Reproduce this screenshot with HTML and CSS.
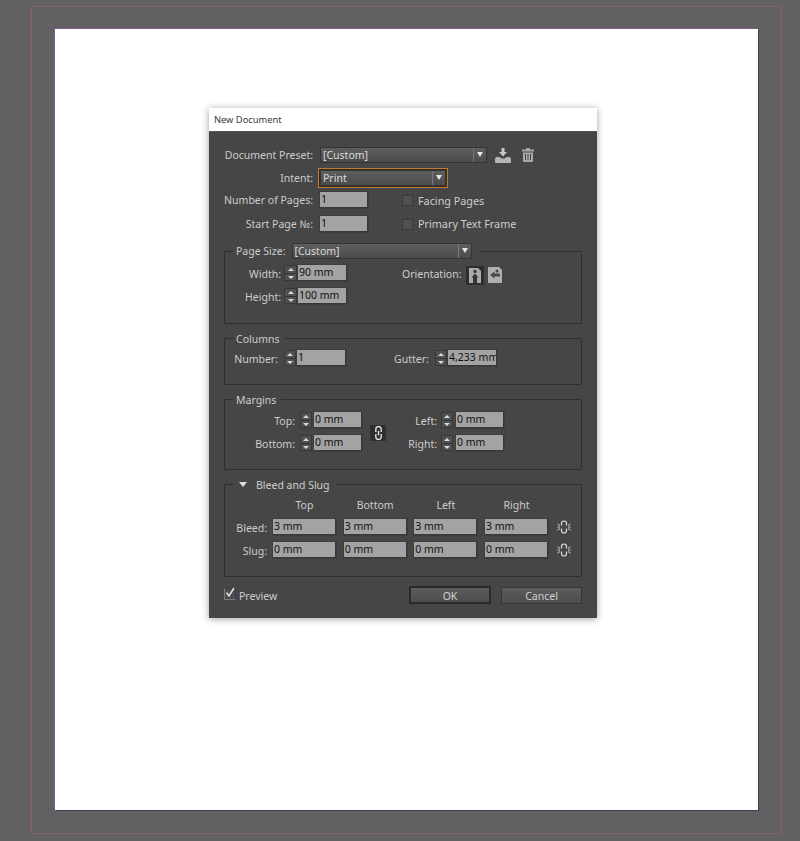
FILE: index.html
```html
<!DOCTYPE html>
<html lang="en">
<head>
<meta charset="utf-8">
<title>New Document</title>
<link rel="stylesheet" href="styles.css">
</head>
<body>
<div class="bleed-guide"></div>
<main class="page">
  <section class="dialog">
    <header class="titlebar">New Document</header>
    <div class="content">
      <div class="row">
        <span class="lbl w-top">Document Preset:</span>
        <div class="select w-preset"><span>[Custom]</span><i class="arrow"></i></div>
        <svg class="ico-save" viewBox="0 0 16 15" width="16" height="15"><path fill="#c9c9c9" d="M6.500 0h3v4H12L8 8.500 4 4h2.500z"/><path fill="#b5b5b5" d="M1 9h3.500l2 1.500h3L11.500 9H15l1 2v3a1 1 0 0 1-1 1H1a1 1 0 0 1-1-1v-3z"/></svg>
        <svg class="ico-trash" viewBox="0 0 12 14" width="12" height="14"><path fill="#a8a8a8" d="M4 0h4v1.500h4v2H0v-2h4z"/><path fill="#a8a8a8" fill-rule="evenodd" d="M1 4.500h10V13a1 1 0 0 1-1 1H2a1 1 0 0 1-1-1zM3 6v6h1V6zm2.500 0v6h1V6zM8 6v6h1V6z"/></svg>
      </div>
      <div class="row mt-intent">
        <span class="lbl w-top">Intent:</span>
        <div class="select w-intent focused"><span>Print</span><i class="arrow"></i></div>
      </div>
      <div class="row mt-pages">
        <span class="lbl w-top">Number of Pages:</span>
        <div class="input w-pages">1</div>
        <span class="check check-top"></span><span class="chk-text">Facing Pages</span>
      </div>
      <div class="row mt-start">
        <span class="lbl w-top">Start Page №:</span>
        <div class="input w-pages">1</div>
        <span class="check check-top"></span><span class="chk-text">Primary Text Frame</span>
      </div>

      <div class="group g-size">
        <div class="legend legend-size">
          <span class="lbl-plain">Page Size:</span>
          <div class="select w-size"><span>[Custom]</span><i class="arrow"></i></div>
        </div>
        <div class="size-body">
          <div class="stack">
            <div class="row">
              <span class="lbl w-size-lbl">Width:</span>
              <div class="spin s-13"><i class="up"></i><i class="down"></i></div>
              <div class="input w-49">90 mm</div>
            </div>
            <div class="row">
              <span class="lbl w-size-lbl">Height:</span>
              <div class="spin s-13"><i class="up"></i><i class="down"></i></div>
              <div class="input w-49">100 mm</div>
            </div>
          </div>
          <div class="orient">
            <span class="lbl-plain">Orientation:</span>
            <div class="orient-btn active">
              <svg viewBox="0 0 12 15" width="12" height="15"><path fill="#ababab" d="M0 0h9l3 3v12H0z"/><path fill="#353535" d="M6 5.500 9.500 9.500H8V15H4V9.500H2.500z"/><circle cx="6" cy="3.500" r="1.700" fill="#353535"/></svg>
            </div>
            <div class="orient-btn">
              <svg viewBox="0 0 14 16" width="14" height="16"><path fill="#b0b0b0" d="M0 0h11l3 3v13H0z"/><path fill="#484848" d="M2 8 6.500 4.500v2H12v3H6.500v2z"/><circle cx="9" cy="4" r="1.500" fill="#484848"/></svg>
            </div>
          </div>
        </div>
      </div>

      <div class="group g-cols">
        <div class="legend legend-text">Columns</div>
        <div class="row">
          <span class="lbl w-num">Number:</span>
          <div class="spin s-12"><i class="up"></i><i class="down"></i></div>
          <div class="input w-49">1</div>
          <span class="lbl w-gutter">Gutter:</span>
          <div class="spin s-12"><i class="up"></i><i class="down"></i></div>
          <div class="input w-49 clipped">4,233 mm</div>
        </div>
      </div>

      <div class="group g-margins">
        <div class="legend legend-text">Margins</div>
        <div class="margin-grid">
          <div class="row">
            <span class="lbl w-mar">Top:</span>
            <div class="spin s-12 sp2"><i class="up"></i><i class="down"></i></div>
            <div class="input w-48">0 mm</div>
          </div>
          <div class="link-btn">
            <svg viewBox="0 0 8 13" width="9" height="14"><path fill="none" stroke="#e2e2e2" stroke-width="1.300" d="M1.500 5.500V3a2.500 2.500 0 0 1 5 0v2.500M1.500 7.500V10a2.500 2.500 0 0 0 5 0V7.500M4 4.500v4"/></svg>
          </div>
          <div class="row">
            <span class="lbl w-mar2">Left:</span>
            <div class="spin s-12 sp3"><i class="up"></i><i class="down"></i></div>
            <div class="input w-48">0 mm</div>
          </div>
          <div class="row">
            <span class="lbl w-mar">Bottom:</span>
            <div class="spin s-12 sp2"><i class="up"></i><i class="down"></i></div>
            <div class="input w-48">0 mm</div>
          </div>
          <div class="row">
            <span class="lbl w-mar2">Right:</span>
            <div class="spin s-12 sp3"><i class="up"></i><i class="down"></i></div>
            <div class="input w-48">0 mm</div>
          </div>
        </div>
      </div>

      <div class="group g-bleed">
        <div class="legend legend-bleed"><i class="disclosure"></i><span>Bleed and Slug</span></div>
        <div class="bleed-grid">
          <span></span><span class="head">Top</span><span class="head">Bottom</span><span class="head">Left</span><span class="head">Right</span><span></span>
          <span class="lbl">Bleed:</span><div class="input">3 mm</div><div class="input">3 mm</div><div class="input">3 mm</div><div class="input">3 mm</div>
          <svg class="ico-unlink" viewBox="0 0 14 14" width="14" height="14"><path fill="none" stroke="#dcdcdc" stroke-width="1.200" d="M4.500 5.500V3.500a2.500 2.500 0 0 1 5 0v2M4.500 8.500v2a2.500 2.500 0 0 0 5 0v-2"/><path fill="none" stroke="#dcdcdc" stroke-width=".9" d="M0.500 4 3 5.500M0.500 7H3M0.500 10 3 8.500M13.500 4 11 5.500M13.500 7H11M13.500 10 11 8.500"/></svg>
          <span class="lbl">Slug:</span><div class="input">0 mm</div><div class="input">0 mm</div><div class="input">0 mm</div><div class="input">0 mm</div>
          <svg class="ico-unlink" viewBox="0 0 14 14" width="14" height="14"><path fill="none" stroke="#dcdcdc" stroke-width="1.200" d="M4.500 5.500V3.500a2.500 2.500 0 0 1 5 0v2M4.500 8.500v2a2.500 2.500 0 0 0 5 0v-2"/><path fill="none" stroke="#dcdcdc" stroke-width=".9" d="M0.500 4 3 5.500M0.500 7H3M0.500 10 3 8.500M13.500 4 11 5.500M13.500 7H11M13.500 10 11 8.500"/></svg>
        </div>
      </div>

      <footer class="footer">
        <span class="check check-preview">
          <svg viewBox="0 0 12 12" width="12" height="12"><path fill="none" stroke="#e4e4e4" stroke-width="1.500" d="M2.500 5.500 5 9 10 1"/></svg>
        </span>
        <span class="preview-text">Preview</span>
        <button class="btn btn-ok">OK</button>
        <button class="btn btn-cancel">Cancel</button>
      </footer>
    </div>
  </section>
</main>
</body>
</html>
```

FILE: styles.css
```css
* { box-sizing: border-box; }
html, body { margin: 0; height: 841px; overflow: hidden; }
body {
  position: relative;
  background: #616161;
  padding: 29px 42px 31px 55px;
  font-family: "Noto Sans", "Open Sans", sans-serif;
  font-size: 10.500px;
  color: #cdcdcd;
}
.bleed-guide {
  position: absolute;
  left: 31px; top: 6px;
  width: 751px; height: 828px;
  border: 1px solid #8b5f6c;
}
.page {
  position: relative;
  height: 781px;
  background: #fff;
  padding-top: 79px;
  box-shadow: -1px -1px 0 #7d5a92, 1px 1px 0 #3e3a5e;
}
.dialog {
  width: 388px;
  margin-left: 154px;
  background: #464646;
  box-shadow: 0 1px 7px rgba(0,0,0,.38);
}
.titlebar {
  height: 24px;
  background: #fff;
  color: #3a3a3a;
  font-size: 9.300px;
  line-height: 24px;
  padding-left: 5px;
  border-bottom: 1px solid #555;
}
.content { padding: 15px 15px 14px; }

.row { display: flex; align-items: center; height: 16px; white-space: nowrap; }
.lbl { display: block; text-align: right; line-height: 16px; flex: none; }
.group .lbl { height: 16px; line-height: 18px; }
.lbl-plain { flex: none; }
.w-top { width: 89px; margin-right: 7px; }
.mt-intent { margin-top: 7px; }
.mt-pages { margin-top: 6px; }
.mt-start { margin-top: 8px; }
.mt-start .chk-text { margin-bottom: 2px; }

.select {
  display: flex;
  align-items: center;
  justify-content: space-between;
  height: 16px;
  flex: none;
  padding-left: 2px;
  background: linear-gradient(#5e5e5e, #4c4c4c);
  border: 1px solid #343434;
  color: #dcdcdc;
  line-height: 14px;
}
.arrow {
  position: relative;
  display: block;
  width: 13px;
  height: 100%;
  border-left: 1px solid #787878;
}
.arrow::after {
  content: "";
  position: absolute;
  left: 3px; top: 4px;
  border: 3.500px solid transparent;
  border-top: 5px solid #e8e8e8;
  border-bottom: 0;
}
.w-preset { width: 167px; }
.w-intent { width: 126px; }
.w-size { width: 180px; margin-left: 6px; }
.focused { box-shadow: 0 0 0 1px #2f2f2f, 0 0 0 2px #c27a2c; }

.input {
  height: 16px;
  flex: none;
  background: #a3a3a3;
  border: 1px solid #383838;
  border-width: 0 1px 1px 0;
  box-shadow: 0 0 0 1px #3e3e3e;
  color: #111;
  line-height: 15px;
  padding-left: 1px;
  overflow: hidden;
  white-space: nowrap;
}
.w-pages { width: 48px; }
.w-49 { width: 49px; }
.w-48 { width: 48px; }

.check {
  display: block;
  flex: none;
  width: 11px; height: 11px;
  background: #505050;
  border: 1px solid #3a3a3a;
}
.check-top { margin-left: 34px; margin-right: 5px; }
.chk-text { flex: none; font-size: 10.800px; }
.ico-save { margin-left: 8px; flex: none; }
.ico-trash { margin-left: 11px; flex: none; }

.group {
  position: relative;
  border: 1px solid #2f2f2f;
  border-radius: 1px;
}
.legend {
  position: absolute;
  background: #464646;
  display: flex;
  align-items: center;
  white-space: nowrap;
}
.legend-size { left: 8px; top: -9px; height: 16px; padding: 0 7px 0 3px; }
.legend-text { left: 8px; top: -8px; height: 15px; padding: 0 5px 0 3px; }
.legend-bleed { left: 8px; top: -8px; height: 15px; padding: 0 6px 0 6px; }
.disclosure {
  display: block;
  width: 0; height: 0;
  margin-right: 9px;
  border: 4.500px solid transparent;
  border-top: 5px solid #dedede;
  border-bottom: 0;
}

.g-size { margin-top: 19px; height: 73px; padding-top: 13px; }
.g-cols { margin-top: 14px; height: 47px; padding-top: 11px; }
.g-margins { margin-top: 14px; height: 71px; padding-top: 12px; }
.g-bleed { margin-top: 14px; height: 93px; padding-top: 13px; }

.size-body { display: flex; align-items: flex-start; }
.stack { display: flex; flex-direction: column; gap: 7px; }
.w-size-lbl { width: 56px; margin-right: 3px; }
.orient { display: flex; align-items: center; height: 20px; margin-left: 55px; }
.orient-btn { display: flex; flex: none; margin-left: 4px; }
.orient .lbl-plain { width: 58px; margin-right: 2px; align-self: flex-start; line-height: 18px; }
.orient-btn.active { padding: 2px 3px; background: #2e2e2e; }

.spin {
  display: flex;
  flex-direction: column;
  height: 16px;
  flex: none;
  margin-right: 1px;
  background: #505050;
  border: 1px solid #383838;
}
.s-13 { width: 13px; }
.s-12 { width: 12px; }
.sp2 { margin-right: 2px; }
.sp3 { margin-right: 3px; }
.spin i { position: relative; display: block; flex: 1; }
.spin i::after {
  content: "";
  position: absolute;
  left: 50%;
  top: 2px;
  margin-left: -3px;
  border: 3px solid transparent;
}
.spin .up { border-bottom: 1px solid #333; }
.spin .up::after { border-bottom: 3px solid #dadada; border-top: 0; }
.spin .down::after { border-top: 3px solid #dadada; border-bottom: 0; }

.w-num { width: 53px; margin-right: 6px; }
.w-gutter { width: 34px; margin-left: 48px; margin-right: 7px; }

.margin-grid {
  display: grid;
  grid-template-columns: 137px 16px auto;
  column-gap: 8px;
  row-gap: 7px;
  justify-content: start;
}
.link-btn {
  grid-column: 2;
  grid-row: 1 / span 2;
  align-self: center;
  margin-top: 3px;
  display: flex;
  align-items: center;
  justify-content: center;
  width: 16px; height: 16px;
  background: #2f2f2f;
}
.w-mar { width: 70px; margin-right: 5px; }
.w-mar2 { width: 43px; margin-right: 4px; }

.bleed-grid {
  display: grid;
  grid-template-columns: 40.330px repeat(4, 63px) 14px;
  column-gap: 7.670px;
  row-gap: 7px;
  align-items: center;
}
.bleed-grid > .lbl { width: 42px; }
.head { text-align: center; line-height: 14px; }
.ico-unlink { margin-left: 1px; }

.footer { display: flex; align-items: center; margin-top: 9px; height: 18px; }
.check-preview {
  position: relative;
  width: 12px; height: 12px;
  margin-bottom: 2px;
  background: #4c4c4c;
  border: 1px solid #7c7c7c;
  border-top-color: #3a3a3a;
  border-right-color: #3a3a3a;
}
.check-preview svg { position: absolute; left: -1px; top: -2px; }
.preview-text { margin-left: 3px; padding-top: 2px; }
.btn {
  font: inherit;
  color: #d2d2d2;
  padding: 1px 0 0;
  background: linear-gradient(#5c5c5c, #4d4d4d);
  border: 1px solid #363636;
}
.btn-ok { width: 82px; height: 18px; margin-left: auto; border: 2px solid #2a2a2a; }
.btn-cancel { width: 81px; height: 17px; margin-left: 10px; }
```
